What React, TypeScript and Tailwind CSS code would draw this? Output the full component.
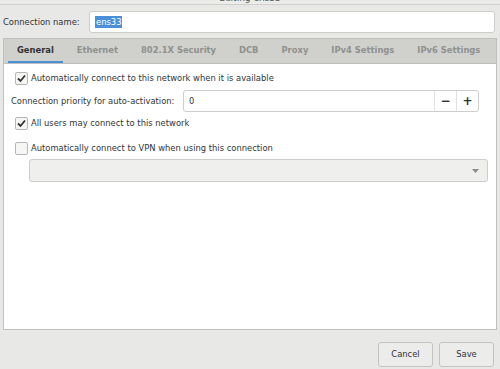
import React from "react";

const tabs = ["General", "Ethernet", "802.1X Security", "DCB", "Proxy", "IPv4 Settings", "IPv6 Settings"];

function Check({ checked }: { checked: boolean }) {
  return (
    <span className="w-[13px] h-[13px] rounded-[2px] border border-[#b6b6b3] bg-[#f6f6f5] flex items-center justify-center shrink-0">
      {checked && (
        <svg width="11" height="11" viewBox="0 0 11 11">
          <path d="M2 5.5 L4.5 8 L9 2.5" fill="none" stroke="#2e3436" strokeWidth="1.8" />
        </svg>
      )}
    </span>
  );
}

export default function App() {
  return (
    <div className="w-[500px] h-[369px] bg-[#e8e8e7] text-[#2e3436] text-[8.4px] whitespace-nowrap overflow-hidden flex flex-col font-['DejaVu_Sans',sans-serif]">
      <div className="h-[5px] border-b border-[#cfcfcc] bg-[#ececeb] overflow-hidden flex justify-center">
        <span className="-mt-[7px] text-[#555753] text-[9px] leading-[11px]">Editing ens33</span>
      </div>
      <div className="flex items-center mt-[6px] pl-[3px] pr-[5px] h-[22px]">
        <span className="w-[86px]">Connection name:</span>
        <div className="flex-1 h-[22px] bg-white border border-[#cdcdca] rounded-[3px] flex items-center px-[5px]">
          <span className="bg-[#4a90d9] text-white px-[1px]">ens33</span>
        </div>
      </div>
      <div className="mt-[5px] mx-[3px] h-[25px] bg-[#d0d0cd] border border-[#bfbfbc] border-b-0 flex items-stretch pl-[4px] gap-[5px]">
        {tabs.map((t, i) => (
          <div
            key={t}
            className={`flex items-center px-[9px] font-bold border-b-[2px] ${
              i === 0 ? "text-[#2e3436] border-[#4a90d9]" : "text-[#8f918d] border-transparent"
            }`}
          >
            {t}
          </div>
        ))}
      </div>
      <div className="mx-[3px] h-[267px] bg-white border border-[#bfbfbc] flex flex-col pl-[7px] pr-[8px]">
        <label className="flex items-center gap-[3px] mt-[8px] ml-[4px] h-[13px]">
          <Check checked />
          <span>Automatically connect to this network when it is available</span>
        </label>
        <div className="flex items-center mt-[5px] h-[22px]">
          <span className="w-[172px]">Connection priority for auto-activation:</span>
          <div className="w-[296px] h-[22px] border border-[#cdcdca] rounded-[3px] flex items-stretch">
            <span className="flex-1 flex items-center px-[5px]">0</span>
            <span className="w-[22px] border-l border-[#e0e0de] flex items-center justify-center text-[12px] font-bold">−</span>
            <span className="w-[22px] border-l border-[#e0e0de] flex items-center justify-center text-[12px] font-bold">+</span>
          </div>
        </div>
        <label className="flex items-center gap-[3px] mt-[5px] ml-[4px] h-[13px]">
          <Check checked />
          <span>All users may connect to this network</span>
        </label>
        <label className="flex items-center gap-[3px] mt-[12px] ml-[4px] h-[13px]">
          <Check checked={false} />
          <span>Automatically connect to VPN when using this connection</span>
        </label>
        <div className="mt-[4px] ml-[18px] w-[459px] h-[23px] bg-[#efefee] border border-[#cdcdca] rounded-[3px] flex items-center justify-end pr-[8px]">
          <svg width="7" height="4" viewBox="0 0 7 4">
            <path d="M0 0 L7 0 L3.5 4 Z" fill="#8a8c88" />
          </svg>
        </div>
      </div>
      <div className="flex justify-end gap-[6px] mt-[12px] pr-[6px]">
        <button className="w-[55px] h-[25px] bg-[#ececeb] border border-[#c3c3c0] rounded-[3px] text-[#2e3436]">Cancel</button>
        <button className="w-[55px] h-[25px] bg-[#ececeb] border border-[#c3c3c0] rounded-[3px] text-[#2e3436]">Save</button>
      </div>
    </div>
  );
}
